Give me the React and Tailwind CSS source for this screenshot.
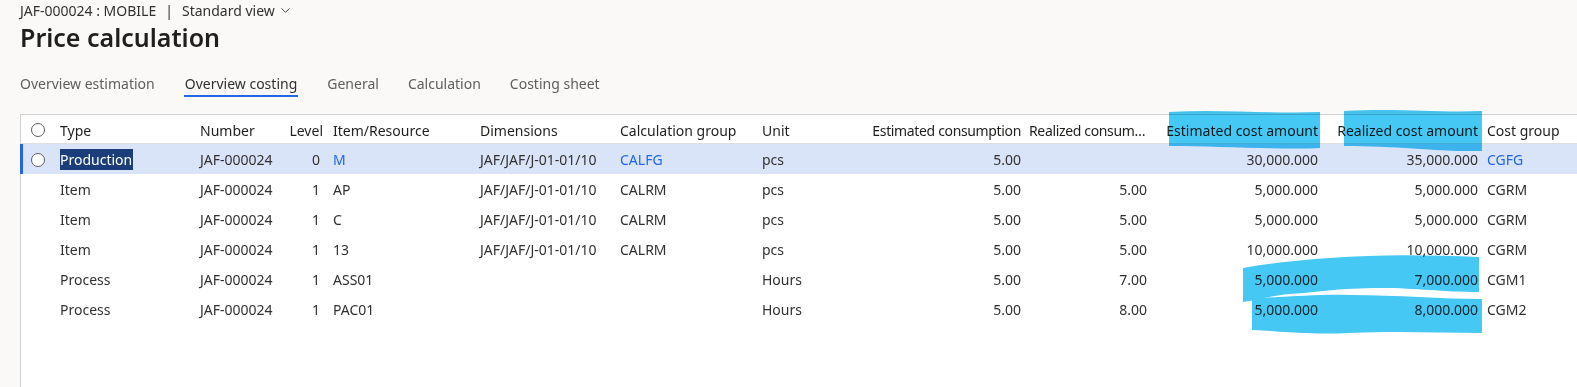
import { ChevronDown } from "lucide-react";

const rows = [
  { type: "Production", number: "JAF-000024", level: "0", item: "M", dim: "JAF/JAF/J-01-01/10", calc: "CALFG", unit: "pcs", estCons: "5.00", realCons: "", estCost: "30,000.000", realCost: "35,000.000", group: "CGFG", selected: true },
  { type: "Item", number: "JAF-000024", level: "1", item: "AP", dim: "JAF/JAF/J-01-01/10", calc: "CALRM", unit: "pcs", estCons: "5.00", realCons: "5.00", estCost: "5,000.000", realCost: "5,000.000", group: "CGRM" },
  { type: "Item", number: "JAF-000024", level: "1", item: "C", dim: "JAF/JAF/J-01-01/10", calc: "CALRM", unit: "pcs", estCons: "5.00", realCons: "5.00", estCost: "5,000.000", realCost: "5,000.000", group: "CGRM" },
  { type: "Item", number: "JAF-000024", level: "1", item: "13", dim: "JAF/JAF/J-01-01/10", calc: "CALRM", unit: "pcs", estCons: "5.00", realCons: "5.00", estCost: "10,000.000", realCost: "10,000.000", group: "CGRM" },
  { type: "Process", number: "JAF-000024", level: "1", item: "ASS01", dim: "", calc: "", unit: "Hours", estCons: "5.00", realCons: "7.00", estCost: "5,000.000", realCost: "7,000.000", group: "CGM1" },
  { type: "Process", number: "JAF-000024", level: "1", item: "PAC01", dim: "", calc: "", unit: "Hours", estCons: "5.00", realCons: "8.00", estCost: "5,000.000", realCost: "8,000.000", group: "CGM2" },
];

const tabs = ["Overview estimation", "Overview costing", "General", "Calculation", "Costing sheet"];

const Radio = () => (
  <span className="block w-[14px] h-[14px] rounded-full border border-[#605e5c] bg-white" />
);

const App = () => {
  return (
    <div
      className="relative w-[1577px] h-[387px] overflow-hidden bg-[#faf9f8] text-[#323130]"
      style={{ fontFamily: '"Noto Sans", "Open Sans", sans-serif' }}
    >
      {/* HEADER */}
      <div className="pl-5 pt-[1px] flex items-center h-[20px] text-[14px] text-[#323130]">
        <span>JAF-000024 : MOBILE</span>
        <span className="mx-[9px]">|</span>
        <span>Standard view</span>
        <ChevronDown size={15} strokeWidth={1.4} className="ml-[3px]" />
      </div>
      <h1 className="pl-5 h-[36px] flex items-center text-[25px] font-semibold text-[#201f1e]">
        Price calculation
      </h1>

      {/* TABS */}
      <div className="pl-5 mt-[12px] flex gap-[29px] text-[14px]">
        {tabs.map((t) => (
          <div
            key={t}
            className={
              t === "Overview costing"
                ? "h-[29px] pt-[5px] border-b-2 border-[#2266e3] text-[#323130] px-[1px]"
                : "h-[29px] pt-[5px] text-[#605e5c]"
            }
          >
            {t}
          </div>
        ))}
      </div>

      {/* GRID */}
      <div className="mt-[17px] ml-5 bg-white border-l border-t border-[#d1d1d1] h-[300px] text-[14px]">
        <div className="flex items-center h-[29px] pt-[2px] border-b border-[#e1dfdd] text-[#201f1e]">
          <div className="w-[39px] pl-[10px] flex"><Radio /></div>
          <div className="w-[140px]">Type</div>
          <div className="w-[80px]">Number</div>
          <div className="w-[43px] text-right">Level</div>
          <div className="w-[157px] pl-[10px]">Item/Resource</div>
          <div className="w-[140px]">Dimensions</div>
          <div className="w-[142px]">Calculation group</div>
          <div className="w-[98px]">Unit</div>
          <div className="w-[161px] text-right whitespace-nowrap tracking-[-0.35px]">Estimated consumption</div>
          <div className="w-[126px] pl-2 truncate tracking-[-0.35px]">Realized consumption</div>
          <div className="w-[171px] text-right whitespace-nowrap">Estimated cost amount</div>
          <div className="w-[160px] text-right whitespace-nowrap">Realized cost amount</div>
          <div className="pl-[9px] whitespace-nowrap">Cost group</div>
        </div>

        {rows.map((r, i) => (
          <div
            key={i}
            className={
              r.selected
                ? "flex items-center h-[30px] pt-[1px] bg-[#d9e4f8] border-l-[3px] border-[#2266e3] -ml-[1px]"
                : "flex items-center h-[30px] pt-[1px]"
            }
          >
            <div className={r.selected ? "w-[37px] pl-[8px] flex" : "w-[39px]"}>{r.selected && <Radio />}</div>
            <div className="w-[140px]">
              {r.selected ? (
                <span className="bg-[#1b3e7b] text-white pr-[1px] py-[1px]">{r.type}</span>
              ) : (
                r.type
              )}
            </div>
            <div className="w-[80px]">{r.number}</div>
            <div className="w-[43px] text-right pr-[3px]">{r.level}</div>
            <div className={r.selected ? "w-[157px] pl-[10px] text-[#2266e3]" : "w-[157px] pl-[10px]"}>{r.item}</div>
            <div className="w-[140px] whitespace-nowrap">{r.dim}</div>
            <div className={r.selected ? "w-[142px] text-[#2266e3]" : "w-[142px]"}>{r.calc}</div>
            <div className="w-[98px]">{r.unit}</div>
            <div className="w-[161px] text-right">{r.estCons}</div>
            <div className="w-[126px] text-right">{r.realCons}</div>
            <div className="w-[171px] text-right">{r.estCost}</div>
            <div className="w-[160px] text-right">{r.realCost}</div>
            <div className={r.selected ? "pl-[9px] text-[#2266e3]" : "pl-[9px]"}>{r.group}</div>
          </div>
        ))}
      </div>

      {/* HIGHLIGHTER MARKS */}
      <svg
        className="absolute left-0 top-0 pointer-events-none mix-blend-multiply"
        width="1577"
        height="387"
      >
        <g fill="#46c8f4">
          <path d="M1169,112 C1220,109 1270,114 1320,112 L1320,148 C1280,150 1220,146 1169,146 Z" />
          <path d="M1344,111 C1400,108 1440,113 1482,111 L1482,151 C1440,152 1400,146 1344,146 Z" />
          <path d="M1243,268 C1270,263 1300,260 1330,258 C1380,254 1430,255 1479,257 L1479,292 C1440,292 1420,288 1380,288 C1340,288 1320,292 1290,294 C1270,296 1255,300 1243,302 Z" />
          <path d="M1252,298 C1290,297 1320,294 1350,295 C1400,295 1440,299 1482,299 L1482,333 C1440,333 1400,331 1350,333 C1310,335 1280,331 1252,330 Z" />
        </g>
      </svg>
    </div>
  );
};

export default App;
